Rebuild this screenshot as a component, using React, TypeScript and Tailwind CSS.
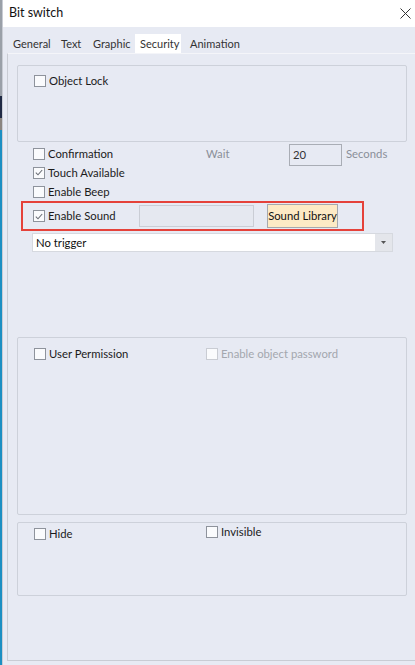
import React from "react";

const Check: React.FC<{ checked?: boolean; disabled?: boolean }> = (props) => (
  <span
    className={
      "flex h-[12px] w-[12px] shrink-0 items-center justify-center border bg-[#fafbfd] " +
      (props.disabled ? "border-[#c9ccd3]" : "border-[#8e939c]")
    }
  >
    {props.checked && (
      <svg width="8" height="7" viewBox="0 0 8 7" fill="none">
        <path d="M0.8 3.6 L3 5.8 L7.2 1" stroke="#6b6f77" strokeWidth="1.1" />
      </svg>
    )}
  </span>
);

const CheckRow: React.FC<{
  label: string;
  checked?: boolean;
  disabled?: boolean;
  className?: string;
}> = (props) => (
  <div className={"flex h-[19px] items-center gap-[3px] " + (props.className ?? "")}>
    <Check checked={props.checked} disabled={props.disabled} />
    <span className={props.disabled ? "text-[#a3a7ae]" : "text-[#1b1b1b]"}>
      {props.label}
    </span>
  </div>
);

export default function App() {
  return (
    <div
      className="flex h-[665px] w-[415px] overflow-hidden bg-[#e7eaf3] text-[11.3px] leading-none"
      style={{ fontFamily: 'Lato, "Segoe UI", sans-serif' }}
    >
      <div className="flex w-[2px] flex-col">
        <div className="h-[96px] bg-[#9aa0a8]" />
        <div className="h-[22px] bg-[#1f2a44]" />
        <div className="h-[12px] bg-[#8a8580]" />
        <div className="flex-1 bg-[#1c8fc2]" />
      </div>
      <div className="flex flex-1 flex-col border-l border-[#c9ccd4]">
        <div className="flex h-[27px] items-center justify-between bg-white pl-[6px] pr-[4px]">
          <span className="text-[12.5px] text-[#111]">Bit switch</span>
          <svg width="11" height="11" viewBox="0 0 11 11">
            <path d="M0.5 0.5 L10.5 10.5 M10.5 0.5 L0.5 10.5" stroke="#333" strokeWidth="1" />
          </svg>
        </div>
        <div className="flex h-[26px] items-end pl-[5px] text-[11px] text-[#333]">
          <div className="flex h-[19px] w-[48px] items-center px-[5px]">General</div>
          <div className="flex h-[19px] w-[32px] items-center px-[5px]">Text</div>
          <div className="flex h-[19px] w-[47px] items-center px-[5px]">Graphic</div>
          <div className="flex h-[19px] w-[46px] items-center bg-white px-[5px]">Security</div>
          <div className="flex h-[19px] items-center px-[9px]">Animation</div>
        </div>
        <div className="mb-[4px] ml-[4px] flex flex-1 flex-col border-b border-l border-t border-b-[#c9ccd4] border-l-[#c9ccd4] border-t-[#f4f5f9] pl-[9px] pr-[8px]">
          <div className="mt-[11px] h-[77px] rounded-[2px] border border-[#cdd1da] pl-[16px] pt-[5px]">
            <CheckRow label="Object Lock" />
          </div>

          <div className="mt-[2px] flex h-[19px] items-start pl-[16px]">
            <CheckRow label="Confirmation" className="w-[173px]" />
            <span className="flex h-[19px] w-[83px] items-center text-[#8a8f99]">Wait</span>
            <div className="flex h-[22px] w-[53px] items-center border border-[#a9adb5] pl-[3px] text-[#333]">
              20
            </div>
            <span className="flex h-[19px] items-center pl-[4px] text-[#8a8f99]">Seconds</span>
          </div>
          <CheckRow label="Touch Available" checked className="ml-[16px]" />
          <CheckRow label="Enable Beep" className="ml-[16px]" />

          <div className="ml-[4px] flex h-[30px] w-[343px] items-center border-2 border-[#e5423a] pl-[10px]">
            <CheckRow label="Enable Sound" checked className="w-[106px]" />
            <div className="h-[22px] w-[115px] border border-[#cacdd5] bg-[#e5e8f0]" />
            <div className="ml-[13px] flex h-[24px] w-[71px] items-center justify-center whitespace-nowrap border border-[#a7a9ad] bg-[#fdeac5] text-[#111]">
              Sound Library
            </div>
          </div>

          <div className="ml-[15px] mt-[2px] flex h-[19px] w-[361px] items-center border border-[#d6d9df] bg-white pl-[3px]">
            <span className="flex-1 text-[#111]">No trigger</span>
            <div className="flex h-[17px] w-[17px] items-center justify-center bg-[#e4e6eb]">
              <svg width="5" height="3" viewBox="0 0 5 3">
                <path d="M0 0 L5 0 L2.5 3 Z" fill="#555" />
              </svg>
            </div>
          </div>

          <div className="mt-[85px] h-[178px] rounded-[2px] border border-[#cdd1da] pl-[16px] pt-[6px]">
            <div className="flex">
              <CheckRow label="User Permission" className="w-[172px]" />
              <CheckRow label="Enable object password" disabled />
            </div>
          </div>

          <div className="mt-[7px] h-[74px] rounded-[2px] border border-[#cdd1da] pl-[16px] pt-[1px]">
            <div className="flex items-start">
              <CheckRow label="Hide" className="w-[172px]" />
              <CheckRow label="Invisible" className="-mt-[2px]" />
            </div>
          </div>
        </div>
      </div>
    </div>
  );
}
